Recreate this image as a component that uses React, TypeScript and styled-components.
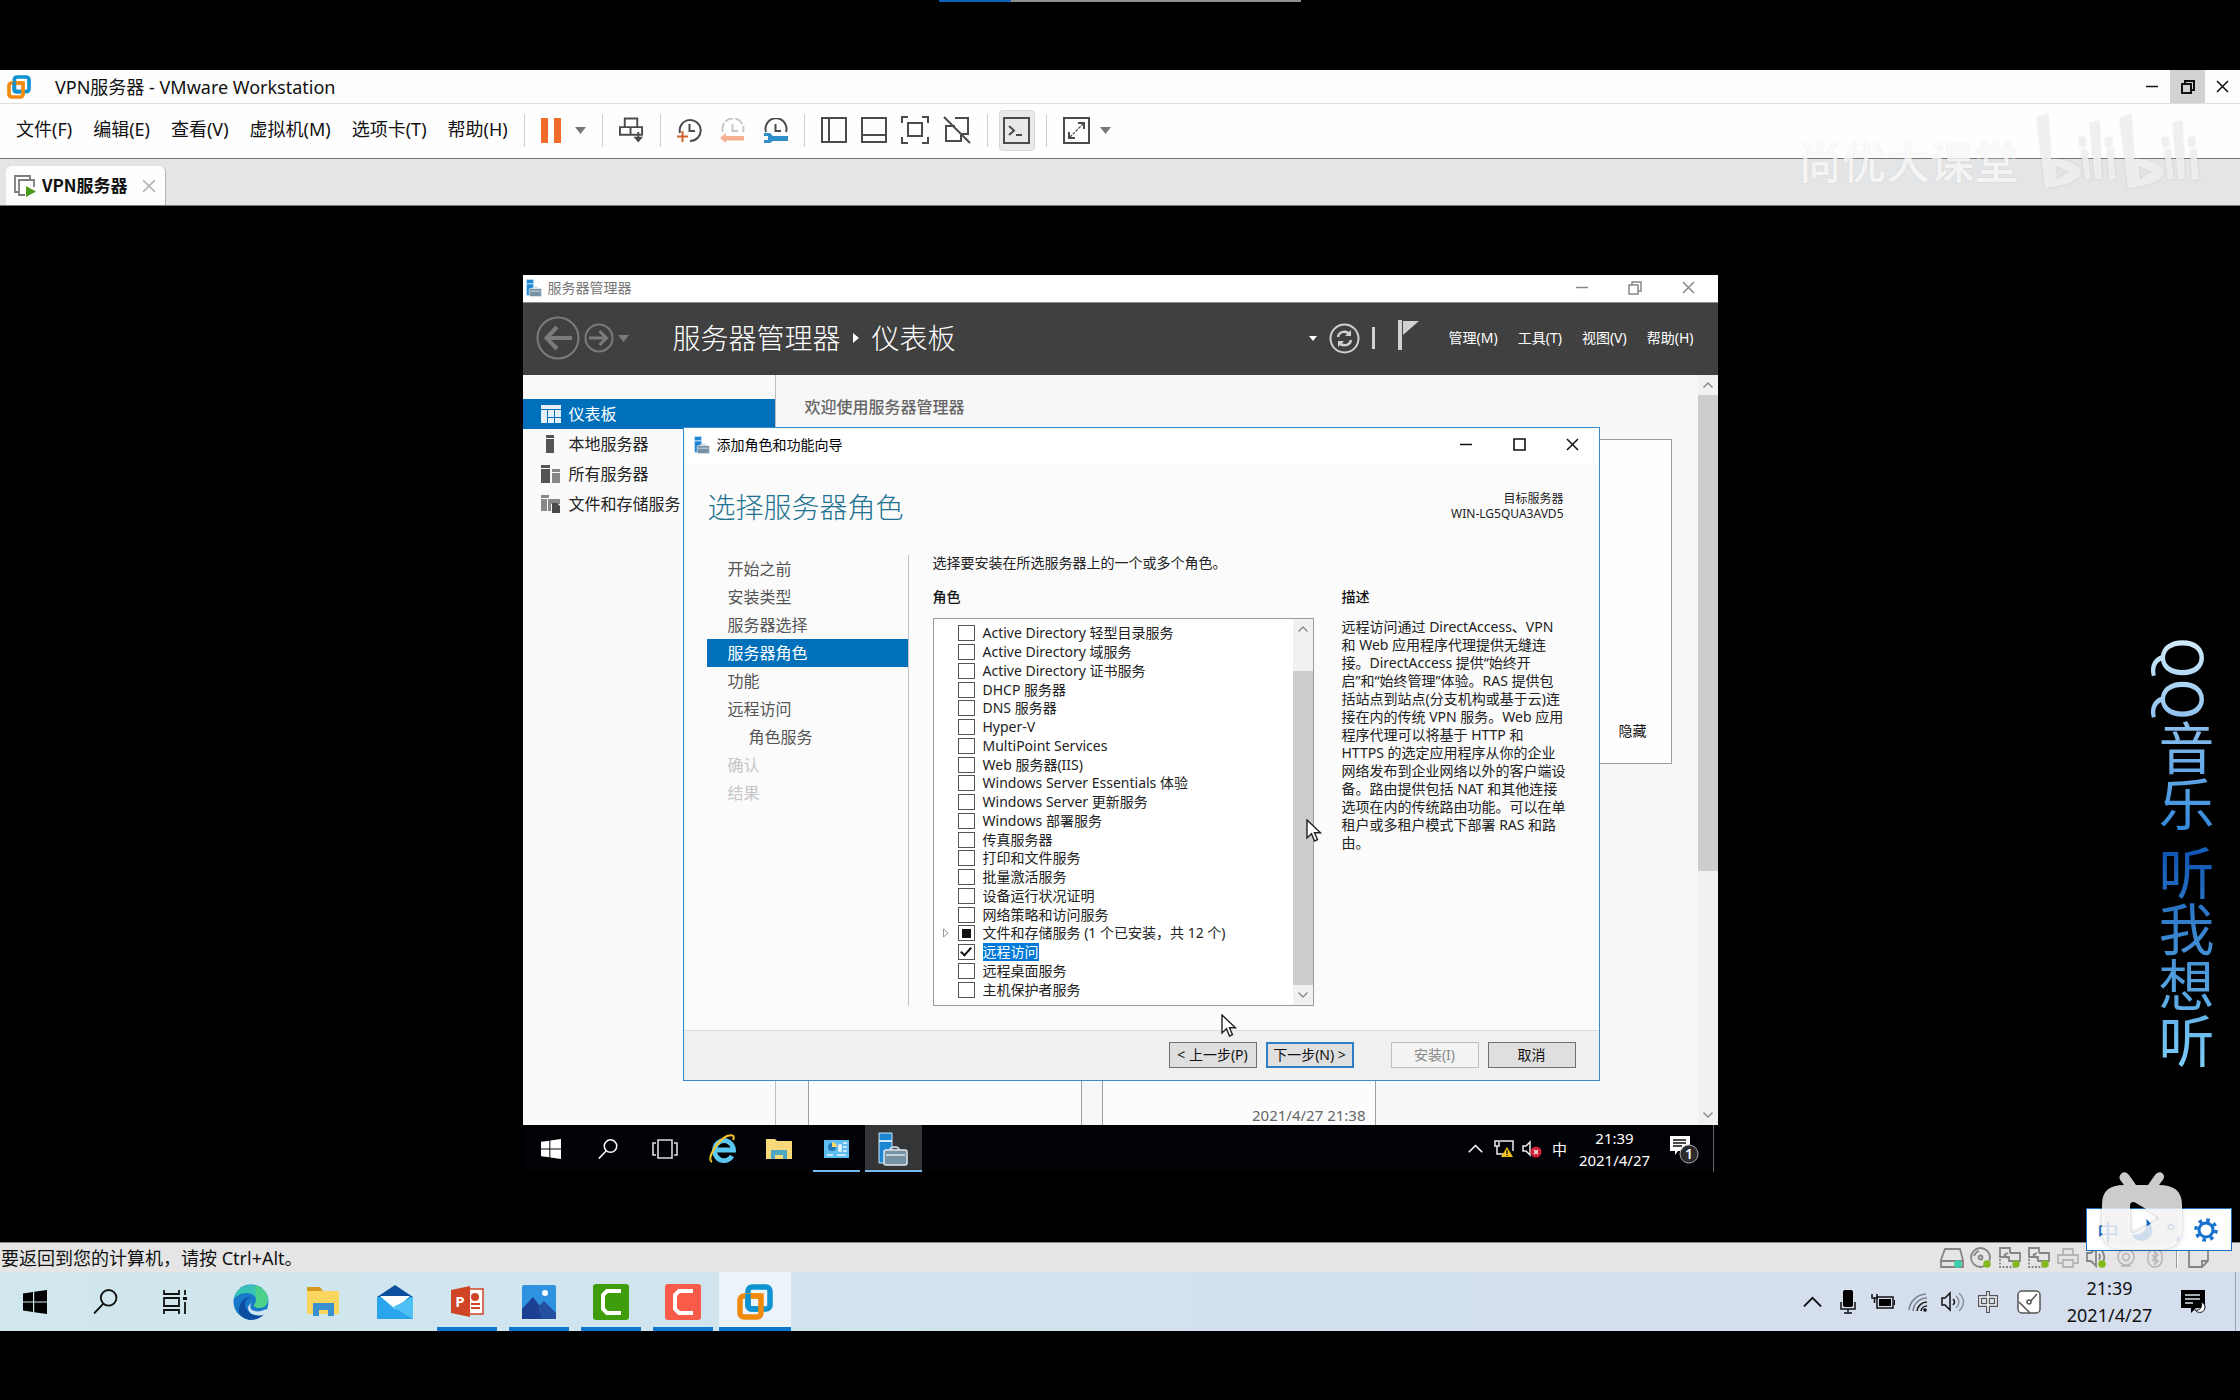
import React from "react";
import styled, { createGlobalStyle, css } from "styled-components";

const Global = createGlobalStyle`
  *, *::before, *::after { box-sizing: border-box; }
  body { margin: 0; background: #000; font-family: "Noto Sans", "Noto Sans CJK SC", sans-serif; color: #111; }
  button { font: inherit; color: inherit; background: none; border: 0; padding: 0; margin: 0; }
  h1, h2, h3, p, ul, ol { margin: 0; padding: 0; font-weight: inherit; font-size: inherit; list-style: none; }
  svg { display: block; flex: none; }
`;

/* ---------- shell ---------- */

const Desktop = styled.div`
  position: relative;
  min-height: 100vh;
  display: flex;
  flex-direction: column;
  padding: 70px 0 69px;
  overflow: hidden;
`;
const TopStrip = styled.div`
  position: absolute;
  top: 0;
  left: 939px;
  width: 362px;
  height: 2px;
  background: linear-gradient(90deg, #0a63b8 72px, #8f8f8f 72px);
`;
const VmWindow = styled.main`
  flex: 1;
  display: flex;
  flex-direction: column;
`;
const TitleBar = styled.header`
  display: flex;
  align-items: center;
  height: 34px;
  padding-left: 7px;
  background: #fdfdfd;
  border-bottom: 1px solid #dedede;
  font-size: 18px;
  line-height: 24px;
`;
const AppTitle = styled.h1`
  margin-left: 24px;
  flex: 1;
`;
const WindowButton = styled.button<{ $active?: boolean }>`
  display: grid;
  place-items: center;
  width: 35px;
  height: 33px;
  background: ${(p) => (p.$active ? "#d2d2d2" : "transparent")};
`;
const MenuRow = styled.div`
  display: flex;
  align-items: center;
  height: 54px;
  padding: 0 0 2px 16px;
  background: #fefefe;
  font-size: 18px;
  line-height: 24px;
`;
const Menu = styled.nav`
  display: flex;
  gap: 21px;
  margin: 0 16px 2px 0;
`;
const ToolGroup = styled.div<{ $gap?: number; $tight?: boolean }>`
  display: flex;
  align-items: center;
  height: 33px;
  gap: ${(p) => p.$gap ?? 14}px;
  padding: 0 ${(p) => (p.$tight ? 11 : 16)}px;
  border-left: 1px solid #cfcfcf;
`;
const Tool = styled.button<{ $pressed?: boolean }>`
  display: grid;
  place-items: center;
  ${(p) =>
    p.$pressed &&
    css`
      width: 36px;
      height: 41px;
      background: #e8e9ea;
      border: 1px solid #d8d8d8;
      border-radius: 4px;
    `}
`;
const TabBar = styled.div`
  display: flex;
  align-items: flex-end;
  height: 48px;
  padding-left: 6px;
  background: #e4e5e7;
  border-top: 1px solid #77777b;
  border-bottom: 1px solid #77777b;
`;
const Tab = styled.div`
  display: flex;
  align-items: center;
  height: 39px;
  padding: 0 9px 0 8px;
  background: #fefefe;
  border-right: 1px solid #b5b5b5;
  border-radius: 6px 6px 0 0;
`;
const TabLabel = styled.button`
  display: flex;
  align-items: center;
  gap: 6px;
  margin-right: 14px;
  font: bold 17px/20px "Noto Sans CJK SC", sans-serif;
  span {
    padding-bottom: 2px;
  }
`;
const Stage = styled.section`
  flex: 1;
  display: grid;
  place-items: center;
  padding-bottom: 1px;
  background: #000;
`;
const StatusBar = styled.footer`
  display: flex;
  align-items: center;
  height: 30px;
  padding: 0 31px 0 1px;
  background: #e5e5e5;
  border-top: 1px solid #8a8a8a;
  font-size: 18px;
  line-height: 24px;
`;
const StatusText = styled.span`
  flex: 1;
`;
const StatusSlot = styled.span`
  display: grid;
  place-items: center;
  width: 29px;
`;
const StatusRule = styled.i`
  width: 2px;
  height: 20px;
  margin: 0 10px 0 7px;
  border-left: 1px solid #9a9a9a;
  border-right: 1px solid #fff;
`;

/* ---------- host taskbar ---------- */

const HostBar = styled.nav`
  display: flex;
  align-items: stretch;
  height: 59px;
  padding-right: 4px;
  background: linear-gradient(90deg, #cfe7ed, #d1e4ee 35%, #d4deed 80%);
`;
const HostButton = styled.button<{ $w: number; $state?: "open" | "active" }>`
  position: relative;
  display: grid;
  place-items: center;
  width: ${(p) => p.$w}px;
  background: ${(p) => (p.$state === "active" ? "#edf3fa" : "transparent")};
  &::after {
    content: "";
    position: absolute;
    bottom: 0;
    left: ${(p) => (p.$state === "active" ? 0 : 6)}px;
    right: ${(p) => (p.$state === "active" ? 0 : 6)}px;
    height: 4px;
    background: ${(p) => (p.$state ? "#0d78d0" : "transparent")};
  }
`;
const HostApps = styled.div`
  display: flex;
  margin-left: 5px;
`;
const Spacer = styled.span`
  flex: 1;
`;
const Clock = styled.button<{ $w: number; $size: number; $line: number }>`
  width: ${(p) => p.$w}px;
  font-size: ${(p) => p.$size}px;
  line-height: ${(p) => p.$line}px;
  text-align: center;
  white-space: nowrap;
`;
const ShowDesktop = styled.button`
  width: 1px;
  margin-left: 15px;
  background: #9aa6b5;
`;

/* ---------- guest display ---------- */

const Guest = styled.div`
  width: 1195px;
  max-width: 100%;
  position: relative;
`;
const Manager = styled.section`
  display: flex;
  flex-direction: column;
  height: 850px;
  background: #f7f7f7;
  overflow: hidden;
`;
const ManagerTitle = styled.header`
  display: flex;
  align-items: center;
  height: 27px;
  padding: 0 3px 2px;
  background: #fff;
  color: #777;
  font-size: 14px;
  line-height: 20px;
`;
const ManagerName = styled.span`
  flex: 1;
  margin-left: 6px;
`;
const CaptionButton = styled.button`
  display: grid;
  place-items: center;
  width: 53px;
  height: 24px;
`;
const ManagerHead = styled.div`
  display: flex;
  align-items: center;
  height: 73px;
  padding: 0 24px 2px 13px;
  background: #404040;
  border-top: 1px solid #8c8c8c;
  color: #fff;
`;
const Crumb = styled.h2`
  display: flex;
  align-items: center;
  gap: 12px;
  flex: 1;
  margin-left: 44px;
  font-size: 28px;
  line-height: 40px;
  font-weight: 300;
`;
const NavButtons = styled.div`
  display: flex;
  align-items: center;
  gap: 4px;
`;
const HeadTools = styled.div`
  display: flex;
  align-items: center;
  gap: 12px;
  margin-right: 30px;
`;
const HeadMenu = styled.nav`
  display: flex;
  gap: 20px;
  font-size: 14px;
  line-height: 20px;
`;
const ManagerBody = styled.div`
  flex: 1;
  display: flex;
  min-height: 0;
`;
const Sidebar = styled.ul`
  width: 253px;
  padding-top: 24px;
  background: #fafafa;
  border-right: 1px solid #bdbdbd;
`;
const SideItem = styled.li<{ $on?: boolean }>`
  button {
    display: flex;
    align-items: center;
    gap: 8px;
    width: 100%;
    height: 30px;
    padding-left: 18px;
    font-size: 16px;
    line-height: 24px;
    color: ${(p) => (p.$on ? "#fff" : "#222")};
    background: ${(p) => (p.$on ? "#0070ba" : "transparent")};
  }
`;
const Dashboard = styled.div`
  flex: 1;
  display: flex;
  flex-direction: column;
  padding: 20px 26px 0 29px;
`;
const Welcome = styled.h3`
  font-size: 16px;
  line-height: 24px;
  font-weight: 500;
  color: #666;
`;
const WelcomePanel = styled.div`
  display: flex;
  align-items: flex-end;
  justify-content: flex-end;
  height: 325px;
  margin: 20px 0 20px 3px;
  padding: 22px 24px;
  background: #fefefe;
  border: 1px solid #9c9c9c;
  font-size: 14px;
  line-height: 20px;
`;
const Tiles = styled.div`
  flex: 1;
  display: flex;
  gap: 20px;
  margin-left: 3px;
`;
const Tile = styled.div`
  width: 274px;
  display: flex;
  align-items: flex-end;
  justify-content: flex-end;
  padding: 0 9px;
  background: #fcfcfc;
  border: 1px solid #a0a0a0;
  border-bottom: 0;
  color: #666;
  font-size: 15px;
  line-height: 20px;
`;
const Scroll = styled.div`
  display: flex;
  flex-direction: column;
  align-items: center;
  width: 20px;
  background: #f1f1f1;
`;
const ScrollArrow = styled.button`
  display: grid;
  place-items: center;
  width: 20px;
  height: 20px;
`;
const Thumb = styled.div<{ $before: number; $grow: number }>`
  width: 20px;
  margin-top: ${(p) => p.$before}px;
  flex: ${(p) => p.$grow} 0 0;
  background: #cdcdcd;
`;
const Rest = styled.div<{ $grow: number }>`
  flex: ${(p) => p.$grow} 0 0;
`;

/* ---------- wizard ---------- */

const Wizard = styled.section`
  position: absolute;
  top: 152px;
  left: 160px;
  right: 118px;
  display: flex;
  flex-direction: column;
  background: #fbfbfb;
  border: 1px solid #3a8acb;
  font-size: 14px;
  line-height: 18px;
  color: #222;
`;
const WizardTitle = styled.header`
  display: flex;
  align-items: center;
  height: 35px;
  padding: 0 0 2px 10px;
  background: #fff;
  color: #000;
`;
const WizardName = styled.span`
  flex: 1;
  margin-left: 7px;
`;
const WizardHead = styled.div`
  display: flex;
  justify-content: space-between;
  height: 92px;
  padding: 24px 35px 0 24px;
`;
const WizardHeading = styled.h2`
  font-size: 28px;
  line-height: 40px;
  font-weight: 300;
  color: #1f7391;
`;
const Target = styled.p`
  padding-top: 4px;
  font-size: 12px;
  line-height: 15px;
  text-align: right;
`;
const WizardBody = styled.div`
  display: flex;
  height: 451px;
  margin-bottom: 24px;
`;
const Steps = styled.ol`
  width: 225px;
  padding-left: 23px;
  border-right: 1px solid #c4c4c4;
`;
const Step = styled.li<{ $state?: "on" | "off" | "sub" }>`
  height: 28px;
  padding-left: ${(p) => (p.$state === "sub" ? 42 : 21)}px;
  font-size: 16px;
  line-height: 28px;
  color: ${(p) => (p.$state === "on" ? "#fff" : p.$state === "off" ? "#c6c6c6" : "#555")};
  background: ${(p) => (p.$state === "on" ? "#0070ba" : "transparent")};
`;
const RolesColumn = styled.div`
  display: flex;
  flex-direction: column;
  width: 381px;
  margin-left: 24px;
`;
const Lead = styled.p`
  line-height: 16px;
  white-space: nowrap;
  margin-bottom: 17px;
`;
const Label = styled.h3`
  font-weight: 500;
  color: #111;
`;
const RoleBox = styled.div`
  flex: 1;
  display: flex;
  margin-top: 12px;
  background: #fff;
  border: 1px solid #9a9a9a;
`;
const RoleList = styled.ul`
  flex: 1;
  display: grid;
  grid-auto-rows: 1fr;
  padding: 5px 0 6px 8px;
`;
const RoleRow = styled.li`
  display: flex;
  align-items: center;
  min-height: 0;
`;
const Expander = styled.span`
  width: 16px;
`;
const RoleLabel = styled.label<{ $on?: boolean }>`
  display: flex;
  align-items: center;
  gap: 8px;
  white-space: nowrap;
  span {
    background: ${(p) => (p.$on ? "#0078d7" : "transparent")};
    color: ${(p) => (p.$on ? "#fff" : "inherit")};
  }
`;
const Check = styled.input<{ $partial?: boolean }>`
  appearance: none;
  display: grid;
  place-items: center;
  width: 17px;
  height: 16px;
  margin: 0;
  background: #fff;
  border: 1px solid #555;
  &::after {
    content: "";
    ${(p) =>
      p.$partial &&
      css`
        width: 9px;
        height: 9px;
        background: #111;
      `}
  }
  &:checked::after {
    width: 6px;
    height: 11px;
    margin-top: -3px;
    border: solid #111;
    border-width: 0 2px 2px 0;
    transform: rotate(42deg);
  }
`;
const Description = styled.div`
  margin: 33px 0 0 28px;
  white-space: nowrap;
`;
const DescriptionText = styled.p`
  margin-top: 12px;
  span {
    display: block;
  }
`;
const WizardFoot = styled.footer`
  display: flex;
  justify-content: flex-end;
  gap: 9px;
  padding: 11px 23px 12px;
  background: #f0f0f0;
  border-top: 1px solid #dcdcdc;
`;
const PushButton = styled.button<{ $default?: boolean; $apart?: boolean }>`
  width: 88px;
  height: 26px;
  margin-left: ${(p) => (p.$apart ? 28 : 0)}px;
  background: #dfdfdf;
  border: ${(p) => (p.$default ? "2px solid #2f7fc6" : "1px solid #707070")};
  white-space: nowrap;
  color: #111;
  &:disabled {
    background: #f3f3f3;
    border-color: #bfbfbf;
    color: #888;
  }
`;

/* ---------- guest taskbar ---------- */

const GuestBar = styled.nav`
  display: flex;
  height: 47px;
  padding-right: 4px;
  background: #010206;
  color: #fff;
`;
const GuestButton = styled.button<{ $state?: "open" | "active" }>`
  position: relative;
  display: grid;
  place-items: center;
  width: 57px;
  background: ${(p) => (p.$state === "active" ? "#343536" : "transparent")};
  &::after {
    content: "";
    position: absolute;
    bottom: 0;
    left: ${(p) => (p.$state === "active" ? 0 : 5)}px;
    right: ${(p) => (p.$state === "active" ? 0 : 5)}px;
    height: 2px;
    background: ${(p) => (p.$state ? "#76b9ed" : "transparent")};
  }
`;
const TraySlot = styled.button<{ $w: number }>`
  display: grid;
  place-items: center;
  width: ${(p) => p.$w}px;
  font-size: 15px;
`;
const GuestRule = styled.i`
  width: 1px;
  background: #666;
`;

/* ---------- things floating over the screen ---------- */

const Float = styled.div<{ $x: number; $y: number }>`
  position: absolute;
  left: ${(p) => p.$x}px;
  top: ${(p) => p.$y}px;
  pointer-events: none;
`;
const Watermark = styled.div`
  position: absolute;
  top: 110px;
  right: 38px;
  display: flex;
  align-items: center;
  gap: 18px;
  color: rgba(255, 255, 255, 0.78);
  font-size: 44px;
  line-height: 60px;
  font-weight: 500;
  text-shadow: 0 0 2px rgba(0, 0, 0, 0.1);
  span {
    padding-top: 22px;
  }
  svg {
    filter: drop-shadow(0 0 1px rgba(0, 0, 0, 0.12));
  }
`;
const Lyrics = styled.div`
  position: absolute;
  top: 637px;
  right: 16px;
  writing-mode: vertical-rl;
  font: 400 56px/76px "Noto Sans CJK SC", sans-serif;
  white-space: nowrap;
  color: transparent;
  background: linear-gradient(180deg, #d3ecfb, #2f86dc 46%, #0f56b4 50%, #7fd0fa);
  background-clip: text;
  -webkit-background-clip: text;
`;
const Ime = styled.div`
  position: absolute;
  right: 8px;
  bottom: 149px;
  display: flex;
  align-items: center;
  justify-content: space-between;
  width: 146px;
  height: 43px;
  padding: 0 13px 0 10px;
  background: #fff;
  border: 1px solid #1f6fc0;
  color: #0f6cc4;
  font-size: 22px;
`;
const TvBadge = styled.div`
  position: absolute;
  right: 57px;
  bottom: 150px;
  filter: drop-shadow(0 0 2px rgba(0, 0, 0, 0.3));
`;

/* ---------- drawings ---------- */

const WindowsLogo = ({ size, fill }: { size: number; fill: string }) => (
  <svg width={size} height={size} viewBox="0 0 24 24" fill={fill}>
    <path d="M0 3.4 10 2v9.4H0zM11.2 1.8 24 0v11.4H11.2zM0 12.6h10V22L0 20.6zM11.2 12.6H24V24l-12.8-1.8z" />
  </svg>
);
const Magnifier = ({ size, color }: { size: number; color: string }) => (
  <svg width={size} height={size} viewBox="0 0 24 24" fill="none" stroke={color} strokeWidth="1.8">
    <circle cx="15" cy="8.5" r="7.5" />
    <path d="M10 14 1 23.5" />
  </svg>
);
const VmLogo = ({ size }: { size: number }) => (
  <svg width={size} height={size} viewBox="0 0 36 36" fill="none">
    <rect x="11" y="3" width="22" height="22" rx="4" stroke="#0c93d0" strokeWidth="5.5" />
    <rect x="3" y="12" width="21" height="21" rx="4" stroke="#f28a0c" strokeWidth="5.5" />
    <path d="M11 14V22a3 3 0 0 0 3 3h7" stroke="#0c93d0" strokeWidth="5.5" />
    <path d="M13 12h11v4" stroke="#f28a0c" strokeWidth="5.5" />
    <path d="M11 10v4" stroke="#0c93d0" strokeWidth="5.5" />
  </svg>
);
const Minus = ({ color }: { color: string }) => (
  <svg width="13" height="13" viewBox="0 0 13 13" stroke={color} strokeWidth="1.5">
    <path d="M0 6.5h12" />
  </svg>
);
const Restore = ({ color, w = 1.5 }: { color: string; w?: number }) => (
  <svg width="14" height="14" viewBox="0 0 14 14" fill="none" stroke={color} strokeWidth={w}>
    <path d="M1 4h9v9H1zM4 4V1h9v9h-3" />
  </svg>
);
const Cross = ({ color, size = 13 }: { color: string; size?: number }) => (
  <svg width={size} height={size} viewBox="0 0 13 13" fill="none" stroke={color} strokeWidth="1.5">
    <path d="M1 1l11 11M12 1 1 12" />
  </svg>
);
const Caret = ({ color = "#777", w = 11 }: { color?: string; w?: number }) => (
  <svg width={w} height={w > 8 ? 7 : 5} viewBox="0 0 11 7" preserveAspectRatio="none" fill={color}>
    <path d="M0 0h11L5.5 7z" />
  </svg>
);
const Chevron = ({ up, color, w = 10 }: { up?: boolean; color: string; w?: number }) => (
  <svg width={w} height={w * 0.6} viewBox="0 0 10 6" fill="none" stroke={color} strokeWidth={w > 12 ? 1 : 1.4}>
    <path d={up ? "M.5 5.5 5 1l4.5 4.5" : "M.5.5 5 5 9.500.5"} />
  </svg>
);
const ServerIcon = ({ size }: { size: number }) => (
  <svg width={size} height={Math.round((size * 34) / 30)} viewBox="0 0 30 34">
    <path d="M1 1h13v30H1z" fill="#1d86d3" stroke="#cfe6f7" strokeWidth="1" />
    <path d="M1 8h13v2H1z" fill="#cfe6f7" />
    <path d="M12 18c0-4 9-4 9 0" fill="none" stroke="#b9cbd8" strokeWidth="2" />
    <rect x="6" y="18" width="23" height="15" rx="2" fill="#7690a4" stroke="#dfe8ee" strokeWidth="1.5" />
    <path d="M8 23h19" stroke="#dfe8ee" strokeWidth="1.5" />
  </svg>
);
const Cursor = () => (
  <svg width="16" height="24" viewBox="0 0 16 24">
    <path d="M1 1v18l4.5-4.2L8.500 22l3-1.300-3-7H14.500z" fill="#fff" stroke="#222" strokeWidth="1.4" />
  </svg>
);
const line = { fill: "none", stroke: "#4b4b4d", strokeWidth: 2 } as const;

const SendKeys = () => (
  <svg width="25" height="26" viewBox="0 0 26 26" {...line}>
    <path d="M6 1h13v9H6zM1 10h11v8H1zM12 10h12v8H12z" />
    <path d="M20 15v6" />
    <path d="M15 20h10l-5 6z" fill="#4b4b4d" stroke="none" />
  </svg>
);
const Snapshot = ({ kind }: { kind: "add" | "revert" | "manage" }) => {
  const faded = kind === "revert";
  return (
    <svg width="25" height="25" viewBox="0 0 25 25" fill="none" stroke={faded ? "#c9c6ca" : "#4b4b4d"} strokeWidth="2">
      <path
        d={kind === "add" ? "M3 15A10.500 10.500 0 1 1 13 23" : "M3 14A10.500 10.500 0 1 1 23 14"}
        strokeDasharray={faded ? "9 2" : undefined}
      />
      <path d="M12.500 6v7H18" />
      {kind === "add" && <path d="M5.500 13v11M0 18.500h11" stroke="#d2622b" />}
      {kind === "revert" && <path d="M0 20l6-5v3h18v4.500H6V25z" fill="#f6b193" stroke="none" />}
      {kind === "manage" && (
        <path d="M1 15h6l3 3h15v5H10l-3 2H1v-3h4v-4H1z" fill="#2f8fc9" stroke="none" />
      )}
    </svg>
  );
};
const LibraryIcon = () => (
  <svg width="26" height="26" viewBox="0 0 26 26" {...line}>
    <path d="M1 1h24v24H1zM8 1v24" />
  </svg>
);
const ThumbBarIcon = () => (
  <svg width="26" height="26" viewBox="0 0 26 26" {...line}>
    <path d="M1 1h24v24H1zM1 18h24" />
  </svg>
);
const FullIcon = () => (
  <svg width="28" height="28" viewBox="0 0 28 28" {...line}>
    <path d="M1 7V1h6M21 1h6v6M27 21v6h-6M7 27H1v-6M7 7h14v13H7z" />
  </svg>
);
const UnityIcon = () => (
  <svg width="28" height="28" viewBox="0 0 28 28" {...line}>
    <path d="M12 2h13v16h-6M9 10H3v15h15v-6M9 10h3M1 1l26 26" />
  </svg>
);
const ConsoleIcon = () => (
  <svg width="27" height="27" viewBox="0 0 27 27" {...line}>
    <path d="M1 1h25v25H1z" />
    <path d="M6 9l5 4.500L6 18M13 18h6" />
  </svg>
);
const StretchIcon = () => (
  <svg width="27" height="27" viewBox="0 0 27 27" {...line}>
    <path d="M1 1h25v25H1z" />
    <path d="M15 6h6v6M12 21H6v-6" />
    <path d="M7 20 20 7" strokeDasharray="3 1" strokeWidth="1.200" />
  </svg>
);
const Bilibili = () => (
  <svg width="166" height="76" viewBox="0 0 166 76" fill="rgba(240,240,240,.9)">
    {[0, 83].map((dx) => (
      <g key={dx} transform={`translate(${dx} 0)`}>
        <path d="M1 5 12 1l3 45c12-1 27 4 30 12 2 10-22 16-36 17zM20 53l1 13 12-7z" fillRule="evenodd" />
        <path d="M43 25l6-1 1 9-6 1zM45 37l6-1 4 30-6 1zM54 10l9-2 3 58-7 1zM69 25l7-1v9l-6 1zM71 37l6-1 3 30-7 1z" />
      </g>
    ))}
  </svg>
);

const sideIcons = {
  dash: (
    <svg width="20" height="18" viewBox="0 0 20 18" fill="#e4f1fb">
      <path d="M0 0h20v4H0zM0 5h6v13H0zM7 5h6v7H7zM14 5h6v7h-6zM7 13h6v5H7zM14 13h6v5h-6z" />
    </svg>
  ),
  local: (
    <svg width="20" height="18" viewBox="0 0 20 18" fill="#555">
      <path d="M5 0h8v3H5zM5 4h8v14H5z" />
    </svg>
  ),
  all: (
    <svg width="20" height="18" viewBox="0 0 20 18" fill="#555">
      <path d="M0 0h9v3H0zM0 4h9v14H0z" />
      <path d="M11 4h8v3h-8zM11 8h8v10h-8z" fill="#888" />
    </svg>
  ),
  files: (
    <svg width="20" height="18" viewBox="0 0 20 18" fill="#888">
      <path d="M0 0h8v3H0zM0 4h6v12H0zM7 4h12v5H7zM7 9h3v7H7z" />
      <path d="M11 8h5l3 3v7h-8z" fill="#4a4a4a" />
    </svg>
  ),
};

const steps: [string, ("on" | "off" | "sub")?][] = [
  ["开始之前"],
  ["安装类型"],
  ["服务器选择"],
  ["服务器角色", "on"],
  ["功能"],
  ["远程访问"],
  ["角色服务", "sub"],
  ["确认", "off"],
  ["结果", "off"],
];
const roles = [
  "Active Directory 轻型目录服务",
  "Active Directory 域服务",
  "Active Directory 证书服务",
  "DHCP 服务器",
  "DNS 服务器",
  "Hyper-V",
  "MultiPoint Services",
  "Web 服务器(IIS)",
  "Windows Server Essentials 体验",
  "Windows Server 更新服务",
  "Windows 部署服务",
  "传真服务器",
  "打印和文件服务",
  "批量激活服务",
  "设备运行状况证明",
  "网络策略和访问服务",
  "文件和存储服务 (1 个已安装，共 12 个)",
  "远程访问",
  "远程桌面服务",
  "主机保护者服务",
];
const about = [
  "远程访问通过 DirectAccess、VPN",
  "和 Web 应用程序代理提供无缝连",
  "接。DirectAccess 提供“始终开",
  "启”和“始终管理”体验。RAS 提供包",
  "括站点到站点(分支机构或基于云)连",
  "接在内的传统 VPN 服务。Web 应用",
  "程序代理可以将基于 HTTP 和",
  "HTTPS 的选定应用程序从你的企业",
  "网络发布到企业网络以外的客户端设",
  "备。路由提供包括 NAT 和其他连接",
  "选项在内的传统路由功能。可以在单",
  "租户或多租户模式下部署 RAS 和路",
  "由。",
];

const AddRolesWizard = () => (
  <Wizard>
    <WizardTitle>
      <ServerIcon size={16} />
      <WizardName>添加角色和功能向导</WizardName>
      <CaptionButton aria-label="最小化"><Minus color="#111" /></CaptionButton>
      <CaptionButton aria-label="最大化">
        <svg width="13" height="13" viewBox="0 0 13 13" fill="none" stroke="#111" strokeWidth="1.6"><path d="M1 1h11v11H1z" /></svg>
      </CaptionButton>
      <CaptionButton aria-label="关闭"><Cross color="#111" /></CaptionButton>
    </WizardTitle>
    <WizardHead>
      <WizardHeading>选择服务器角色</WizardHeading>
      <Target>
        目标服务器
        <br />
        WIN-LG5QUA3AVD5
      </Target>
    </WizardHead>
    <WizardBody>
      <Steps>
        {steps.map(([name, state]) => (
          <Step key={name} $state={state}>{name}</Step>
        ))}
      </Steps>
      <RolesColumn>
        <Lead>选择要安装在所选服务器上的一个或多个角色。</Lead>
        <Label>角色</Label>
        <RoleBox>
          <RoleList>
            {roles.map((role, i) => (
              <RoleRow key={role}>
                <Expander>
                  {i === 16 && (
                    <svg width="8" height="10" viewBox="0 0 8 10" fill="none" stroke="#999"><path d="M1.500 1v8L6 5z" /></svg>
                  )}
                </Expander>
                <RoleLabel $on={i === 17}>
                  <Check type="checkbox" defaultChecked={i === 17} $partial={i === 16} />
                  <span>{role}</span>
                </RoleLabel>
              </RoleRow>
            ))}
          </RoleList>
          <Scroll>
            <ScrollArrow aria-label="向上"><Chevron up color="#888" /></ScrollArrow>
            <Thumb $before={32} $grow={1} />
            <ScrollArrow aria-label="向下"><Chevron color="#888" /></ScrollArrow>
          </Scroll>
        </RoleBox>
      </RolesColumn>
      <Description>
        <Label>描述</Label>
        <DescriptionText>
          {about.map((t) => (
            <span key={t}>{t}</span>
          ))}
        </DescriptionText>
      </Description>
    </WizardBody>
    <WizardFoot>
      <PushButton>&lt; 上一步(P)</PushButton>
      <PushButton $default>下一步(N) &gt;</PushButton>
      <PushButton $apart disabled>安装(I)</PushButton>
      <PushButton>取消</PushButton>
    </WizardFoot>
  </Wizard>
);

const ServerManager = () => (
  <Manager>
    <ManagerTitle>
      <ServerIcon size={16} />
      <ManagerName>服务器管理器</ManagerName>
      <CaptionButton aria-label="最小化"><Minus color="#888" /></CaptionButton>
      <CaptionButton aria-label="还原"><Restore color="#888" /></CaptionButton>
      <CaptionButton aria-label="关闭"><Cross color="#888" /></CaptionButton>
    </ManagerTitle>
    <ManagerHead>
      <NavButtons>
        <button aria-label="后退">
          <svg width="44" height="44" viewBox="0 0 44 44" fill="none" stroke="#7b7b7b" strokeWidth="2">
            <circle cx="22" cy="22" r="20.500" />
            <path d="M36 22H11M21 11 10.500 22 21 33" strokeWidth="4" />
          </svg>
        </button>
        <button aria-label="前进">
          <svg width="30" height="30" viewBox="0 0 30 30" fill="none" stroke="#7b7b7b" strokeWidth="2">
            <circle cx="15" cy="15" r="13.500" />
            <path d="M5 15h17M15.500 8l7 7-7 7" strokeWidth="3" />
          </svg>
        </button>
        <Caret color="#7b7b7b" />
      </NavButtons>
      <Crumb>
        服务器管理器
        <svg width="7" height="10" viewBox="0 0 7 10" fill="#fff"><path d="M0 0v10l6-5z" /></svg>
        仪表板
      </Crumb>
      <HeadTools>
        <Caret color="#fff" w={8} />
        <svg width="31" height="31" viewBox="0 0 31 31" fill="none" stroke="#d0d0d0" strokeWidth="2">
          <circle cx="15.500" cy="15.500" r="14" />
          <path d="M9 14c1-6 9-7 12-2M22 17c-1 6-9 7-12 2" strokeWidth="2.500" />
          <path d="M22 7v6h-6zM9 24v-6h6z" fill="#d0d0d0" stroke="none" />
        </svg>
        <svg width="3" height="22" viewBox="0 0 3 22" fill="#d0d0d0"><path d="M0 0h3v22H0z" /></svg>
        <svg width="32" height="36" viewBox="0 0 32 36" fill="#d0d0d0">
          <path d="M11 0h4v30h-4zM16 1h16L16 15z" />
        </svg>
      </HeadTools>
      <HeadMenu>
        <button>管理(M)</button>
        <button>工具(T)</button>
        <button>视图(V)</button>
        <button>帮助(H)</button>
      </HeadMenu>
    </ManagerHead>
    <ManagerBody>
      <Sidebar>
        <SideItem $on><button>{sideIcons.dash}仪表板</button></SideItem>
        <SideItem><button>{sideIcons.local}本地服务器</button></SideItem>
        <SideItem><button>{sideIcons.all}所有服务器</button></SideItem>
        <SideItem><button>{sideIcons.files}文件和存储服务</button></SideItem>
      </Sidebar>
      <Dashboard>
        <Welcome>欢迎使用服务器管理器</Welcome>
        <WelcomePanel><button>隐藏</button></WelcomePanel>
        <Tiles>
          <Tile />
          <Tile>2021/4/27 21:38</Tile>
        </Tiles>
      </Dashboard>
      <Scroll>
        <ScrollArrow aria-label="向上"><Chevron up color="#888" /></ScrollArrow>
        <Thumb $before={0} $grow={67} />
        <Rest $grow={33} />
        <ScrollArrow aria-label="向下"><Chevron color="#888" /></ScrollArrow>
      </Scroll>
    </ManagerBody>
  </Manager>
);

const GuestTaskbar = () => (
  <GuestBar>
    <GuestButton aria-label="开始"><WindowsLogo size={20} fill="#fff" /></GuestButton>
    <GuestButton aria-label="搜索"><Magnifier size={20} color="#fff" /></GuestButton>
    <GuestButton aria-label="任务视图">
      <svg width="26" height="20" viewBox="0 0 26 20" fill="none" stroke="#ddd" strokeWidth="1.600">
        <path d="M6 1h14v18H6zM4 4H1v12h3M22 4h3v12h-3" />
      </svg>
    </GuestButton>
    <GuestButton aria-label="Internet Explorer">
      <svg width="27" height="30" viewBox="0 0 27 30" fill="none">
        <path d="M23 22a9.500 10 0 1 1 1.500-6H7" stroke="#5cc8f2" strokeWidth="4.800" />
        <path d="M3 28C-3 25 8 7 18 2c6-2 8 0 6 4" stroke="#f3c62c" strokeWidth="2" />
      </svg>
    </GuestButton>
    <GuestButton aria-label="文件资源管理器">
      <svg width="26" height="22" viewBox="0 0 26 22">
        <path d="M0 1h9l2 2h15v18H0z" fill="#f8d878" />
        <path d="M5 21v-9h16v9h-4v-4H9v4z" fill="#4da7c2" />
      </svg>
    </GuestButton>
    <GuestButton aria-label="控制面板" $state="open">
      <svg width="25" height="18" viewBox="0 0 25 18">
        <path d="M0 0h25v18H0z" fill="#5dbdf0" />
        <circle cx="8" cy="7" r="4" fill="#2378b8" />
        <path d="M8 7V2a5 5 0 0 1 5 5z" fill="#f5d76a" />
        <path d="M15 5h2v6h-2zM19 3h4M19 7h4M19 11h4M3 15h6M13 15h9" stroke="#eaf6ff" strokeWidth="1.500" fill="#eaf6ff" />
      </svg>
    </GuestButton>
    <GuestButton aria-label="服务器管理器" $state="active"><ServerIcon size={30} /></GuestButton>
    <Spacer />
    <TraySlot $w={28} aria-label="显示隐藏的图标"><Chevron up color="#fff" w={15} /></TraySlot>
    <TraySlot $w={28} aria-label="网络">
      <svg width="20" height="18" viewBox="0 0 20 18" fill="none" stroke="#eee" strokeWidth="1.500">
        <path d="M6 1h13v10M1 1h4v5H1zM3 6v8h7" />
        <path d="M13 7l6 10H7z" fill="#f6c21c" stroke="none" />
        <path d="M13 10v4M13 15v1" stroke="#222" />
      </svg>
    </TraySlot>
    <TraySlot $w={28} aria-label="音量">
      <svg width="20" height="18" viewBox="0 0 20 18" fill="none" stroke="#eee" strokeWidth="1.500">
        <path d="M1 6h3l4-4v13l-4-4H1z" />
        <circle cx="14" cy="12" r="5.500" fill="#d2203c" stroke="none" />
        <path d="M12 10l4 4M16 10l-4 4" />
      </svg>
    </TraySlot>
    <TraySlot $w={28}>中</TraySlot>
    <Clock $w={82} $size={15} $line={22}>
      21:39
      <br />
      2021/4/27
    </Clock>
    <TraySlot $w={57} aria-label="通知">
      <svg width="30" height="30" viewBox="0 0 30 30">
        <path d="M1 2h20v15H9l-3 4v-4H1z" fill="#fff" />
        <path d="M4 6h13M4 9h13M4 12h9" stroke="#111" strokeWidth="1.500" />
        <circle cx="20" cy="20" r="9" fill="#2b2b2b" stroke="#aaa" />
        <text x="20" y="25" textAnchor="middle" fill="#fff" fontSize="14" fontWeight="600">1</text>
      </svg>
    </TraySlot>
    <GuestRule />
  </GuestBar>
);

const HostTaskbar = () => (
  <HostBar>
    <HostButton $w={70} aria-label="开始"><WindowsLogo size={24} fill="#000" /></HostButton>
    <HostButton $w={70} aria-label="搜索"><Magnifier size={25} color="#111" /></HostButton>
    <HostButton $w={70} aria-label="任务视图">
      <svg width="25" height="24" viewBox="0 0 25 24" fill="none" stroke="#111" strokeWidth="1.800">
        <path d="M1 0v4h15V0M1 8h15v8H1zM1 24v-4h15v4M22 0v5M22 12v12" />
        <path d="M20 7h4v3h-4z" fill="#111" stroke="none" />
      </svg>
    </HostButton>
    <HostApps>
      <HostButton $w={72} aria-label="Edge">
        <svg width="36" height="36" viewBox="0 0 36 36">
          <circle cx="18" cy="18" r="17.500" fill="#1877c9" />
          <path d="M1 15C3 5 10 1 18 1c10 0 17 7 17 15 0 5-4 8-9 8-3 0-5-1-5-3 0-1 2-2 2-5 0-4-4-7-9-7C8 9 3 12 1 15z" fill="#36c3b4" />
          <path d="M22 1.500C31 3 35 10 35 16c0 5-4 8-9 8-3 0-5-1-5-3 0-1 2-2 2-5z" fill="#54d778" opacity=".7" />
          <path d="M12 20c0 8 8 12 19 10-3 4-8 6-13 6C9 35 3 29 7 21c2-5 6-8 11-8-4 1-6 4-6 7z" fill="#0c4da0" />
          <path d="M21 18c-4 1-5 5-2 8 3 2 9 2 14-1 0 2 3 0 3 0v3c-3 3-9 4-14 3-9-2-9-11-1-13z" fill="#d0e6ee" />
        </svg>
      </HostButton>
      <HostButton $w={72} aria-label="文件资源管理器">
        <svg width="34" height="30" viewBox="0 0 34 30">
          <path d="M1 0h13l3 4H1z" fill="#d79a1e" />
          <path d="M1 4h32v23H1z" fill="#fbd65f" />
          <path d="M7 29V16h21v13h-6v-6h-9v6z" fill="#3c8fd0" />
        </svg>
      </HostButton>
      <HostButton $w={72} aria-label="邮件">
        <svg width="36" height="34" viewBox="0 0 36 34">
          <path d="M0 12 18 0l18 12z" fill="#0b4f9e" />
          <path d="M0 12h36v22H0z" fill="#2aa4ea" />
          <path d="M3 11h30L18 24z" fill="#fdfdfd" />
          <path d="M36 12v22L16 22z" fill="#4fc0f5" />
        </svg>
      </HostButton>
      <HostButton $w={72} $state="open" aria-label="PowerPoint">
        <svg width="33" height="31" viewBox="0 0 33 31">
          <path d="M16 3h16v25H16z" fill="#fff" stroke="#cf4526" strokeWidth="1.500" />
          <circle cx="24" cy="11" r="4" fill="#cf4526" />
          <path d="M20 18h9M20 22h9" stroke="#cf4526" strokeWidth="2" />
          <path d="M0 4 19 0v31L0 27z" fill="#cf4526" />
          <text x="9" y="21" textAnchor="middle" fill="#fff" fontSize="15" fontWeight="700">P</text>
        </svg>
      </HostButton>
      <HostButton $w={72} $state="open" aria-label="照片">
        <svg width="34" height="34" viewBox="0 0 34 34">
          <rect width="34" height="34" rx="2" fill="#2f92e0" />
          <path d="M0 24 11 12l13 17v5H0z" fill="#1c3f94" />
          <path d="M16 22l6-6 12 12v6H20z" fill="#24519f" />
          <circle cx="23" cy="8" r="3" fill="#fff" />
        </svg>
      </HostButton>
      {["#3f9c0a", "#f95b4a"].map((fill) => (
        <HostButton $w={72} $state="open" key={fill} aria-label="Camtasia">
          <svg width="36" height="36" viewBox="0 0 36 36">
            <rect width="36" height="36" rx="3" fill={fill} />
            <path d="M28 7H14l-4 4v14l4 4h14" fill="none" stroke="#fff" strokeWidth="4" />
          </svg>
        </HostButton>
      ))}
      <HostButton $w={72} $state="active" aria-label="VMware Workstation"><VmLogo size={36} /></HostButton>
    </HostApps>
    <Spacer />
    <TraySlot $w={35} aria-label="显示隐藏的图标"><Chevron up color="#111" w={19} /></TraySlot>
    <TraySlot $w={35} aria-label="麦克风">
      <svg width="16" height="24" viewBox="0 0 16 24">
        <rect x="3" y="0" width="10" height="17" rx="2" />
        <path d="M1 12v7h14v-7M8 19v4M4 23h8" fill="none" stroke="#111" strokeWidth="1.500" />
      </svg>
    </TraySlot>
    <TraySlot $w={35} aria-label="电池">
      <svg width="24" height="17" viewBox="0 0 24 17">
        <path d="M6 4h16v11H6z" fill="none" stroke="#111" strokeWidth="1.500" />
        <path d="M8 6h12v7H8zM23 7h1v5h-1z" />
        <path d="M1 1v4h5V1M3.500 5v5" fill="none" stroke="#111" strokeWidth="1.500" />
      </svg>
    </TraySlot>
    <TraySlot $w={35} aria-label="无线网络">
      <svg width="20" height="20" viewBox="0 0 20 20" fill="none" strokeWidth="1.600">
        <path d="M1 18A18 18 0 0 1 18 2M5 19A14 14 0 0 1 19 6" stroke="#7b8490" />
        <path d="M9 19a10 10 0 0 1 10-9M13 19a6 6 0 0 1 6-5" stroke="#222" />
        <circle cx="17" cy="18" r="1.800" fill="#111" />
      </svg>
    </TraySlot>
    <TraySlot $w={35} aria-label="音量">
      <svg width="24" height="22" viewBox="0 0 24 22" fill="none" stroke="#111" strokeWidth="1.500">
        <path d="M1 7h3l5-5v17l-5-5H1zM12 8c2 2 2 4 0 6" />
        <path d="M15 5c4 4 4 8 0 12M18 2c6 6 6 12 0 18" stroke="#8b94a0" />
      </svg>
    </TraySlot>
    <TraySlot $w={35} aria-label="输入法">
      <svg width="20" height="22" viewBox="0 0 20 22" fill="none">
        <path d="M2 6h16v8H2zM10 0v22" stroke="#555" strokeWidth="4" />
        <path d="M2 6h16v8H2zM10 1v20" stroke="#f6f8fb" strokeWidth="1.600" />
      </svg>
    </TraySlot>
    <TraySlot $w={48} aria-label="手写笔">
      <svg width="24" height="24" viewBox="0 0 24 24" fill="#fff" stroke="#555" strokeWidth="1.500">
        <rect x="1" y="1" width="22" height="22" rx="4" />
        <path d="M2 12l11 11M20 4l-7 8" />
        <circle cx="12" cy="12" r="2" />
      </svg>
    </TraySlot>
    <Clock $w={113} $size={18} $line={27}>
      21:39
      <br />
      2021/4/27
    </Clock>
    <TraySlot $w={54} aria-label="通知">
      <svg width="25" height="24" viewBox="0 0 25 24">
        <path d="M0 0h24v18h-9l-5 5v-5H0z" />
        <path d="M4 5h15M4 9h15M4 13h8" stroke="#dbe3ee" strokeWidth="1.500" />
        <path d="M20 12c2 6-2 9-6 8 3 4 10 3 10-3 0-3-2-4-4-5z" fill="#fff" stroke="#111" />
      </svg>
    </TraySlot>
    <ShowDesktop aria-label="显示桌面" />
  </HostBar>
);

const NetIcon = () => (
  <svg width="22" height="21" viewBox="0 0 22 21" fill="none" stroke="#858585" strokeWidth="1.800">
    <path d="M11 6V1H1v9h8" />
    <path d="M11 6h10v8H10V9M5 8l4-2M5 8l4 3" />
    <path d="M1 12v8h14" strokeDasharray="2 1.500" />
    <circle cx="17" cy="17" r="3.800" fill="#83b91f" stroke="none" />
  </svg>
);

const StatusIcons = () => (
  <>
    <StatusSlot>
      <svg width="24" height="20" viewBox="0 0 24 20" fill="none" stroke="#858585" strokeWidth="1.800">
        <path d="M5 1h15l3 11v7H1v-7zM1 13h22" />
        <circle cx="18" cy="16" r="3.800" fill="#35cfae" stroke="none" />
      </svg>
    </StatusSlot>
    <StatusSlot>
      <svg width="22" height="21" viewBox="0 0 22 21" fill="none" stroke="#858585" strokeWidth="1.800">
        <circle cx="10.500" cy="10.500" r="9.500" />
        <circle cx="10.500" cy="10.500" r="2" />
        <path d="M4 9c1-3 2-4 5-5" />
        <circle cx="17" cy="17" r="3.800" fill="#83b91f" stroke="none" />
      </svg>
    </StatusSlot>
    <StatusSlot><NetIcon /></StatusSlot>
    <StatusSlot><NetIcon /></StatusSlot>
    <StatusSlot>
      <svg width="22" height="20" viewBox="0 0 22 20" fill="none" stroke="#b5b5b5" strokeWidth="1.800">
        <path d="M6 6V1h10v5M5 15H1V7h20v8h-4M6 12h10v7H6z" />
      </svg>
    </StatusSlot>
    <StatusSlot>
      <svg width="22" height="21" viewBox="0 0 22 21" fill="none" stroke="#858585" strokeWidth="1.800">
        <path d="M1 6h4l5-5v18l-5-5H1zM13 7c2 2 1 4 0 6M16 4c3 4 3 7 1 11" />
        <circle cx="16" cy="17" r="3.800" fill="#83b91f" stroke="none" />
      </svg>
    </StatusSlot>
    <StatusSlot>
      <svg width="18" height="20" viewBox="0 0 18 20" fill="none" stroke="#b5b5b5" strokeWidth="1.500">
        <circle cx="9" cy="9" r="8" />
        <circle cx="9" cy="9" r="3.500" />
        <path d="M4 18h10" />
      </svg>
    </StatusSlot>
    <StatusSlot>
      <svg width="16" height="20" viewBox="0 0 16 20" fill="none" stroke="#b5b5b5" strokeWidth="1.500">
        <rect x="1" y="1" width="14" height="18" rx="7" />
        <path d="M5 7l6 6-3 3V4l3 3-6 6" />
      </svg>
    </StatusSlot>
    <StatusRule />
    <svg width="21" height="20" viewBox="0 0 21 20" fill="none" stroke="#858585" strokeWidth="1.800">
      <path d="M1 1h19v12l-6 6H1zM20 13h-6v6" />
    </svg>
  </>
);

export default function App() {
  return (
    <>
      <Global />
      <Desktop>
        <TopStrip />
        <VmWindow>
          <TitleBar>
            <VmLogo size={24} />
            <AppTitle>VPN服务器 - VMware Workstation</AppTitle>
            <WindowButton aria-label="最小化"><Minus color="#111" /></WindowButton>
            <WindowButton $active aria-label="还原"><Restore color="#111" w={2} /></WindowButton>
            <WindowButton aria-label="关闭"><Cross color="#111" /></WindowButton>
          </TitleBar>
          <MenuRow>
            <Menu>
              {["文件(F)", "编辑(E)", "查看(V)", "虚拟机(M)", "选项卡(T)", "帮助(H)"].map((m) => (
                <button key={m}>{m}</button>
              ))}
            </Menu>
            <ToolGroup>
              <Tool aria-label="挂起">
                <svg width="20" height="25" viewBox="0 0 20 25" fill="#f26a2a"><path d="M0 0h7v25H0zM13 0h7v25h-7z" /></svg>
              </Tool>
              <Caret />
            </ToolGroup>
            <ToolGroup>
              <Tool aria-label="发送 Ctrl+Alt+Del"><SendKeys /></Tool>
            </ToolGroup>
            <ToolGroup $gap={18}>
              <Tool aria-label="拍摄快照"><Snapshot kind="add" /></Tool>
              <Tool aria-label="恢复快照"><Snapshot kind="revert" /></Tool>
              <Tool aria-label="管理快照"><Snapshot kind="manage" /></Tool>
            </ToolGroup>
            <ToolGroup>
              <Tool aria-label="显示库"><LibraryIcon /></Tool>
              <Tool aria-label="缩略图栏"><ThumbBarIcon /></Tool>
              <Tool aria-label="全屏"><FullIcon /></Tool>
              <Tool aria-label="Unity"><UnityIcon /></Tool>
            </ToolGroup>
            <ToolGroup $tight>
              <Tool $pressed aria-label="控制台视图"><ConsoleIcon /></Tool>
            </ToolGroup>
            <ToolGroup $gap={10}>
              <Tool aria-label="拉伸"><StretchIcon /></Tool>
              <Caret />
            </ToolGroup>
          </MenuRow>
          <TabBar>
            <Tab>
              <TabLabel>
                <svg width="22" height="22" viewBox="0 0 22 22" fill="none" stroke="#7d7d7d" strokeWidth="1.800">
                  <path d="M4 17H1V1h15v3M11 20H5V5h15v7" />
                  <path d="M12 11v11l10-5.500z" fill="#4b9a1c" stroke="none" />
                </svg>
                <span>VPN服务器</span>
              </TabLabel>
              <button aria-label="关闭标签"><Cross color="#b5b5b5" size={14} /></button>
            </Tab>
          </TabBar>
          <Stage>
            <Guest>
              <ServerManager />
              <GuestTaskbar />
              <AddRolesWizard />
              <Float $x={783} $y={544}><Cursor /></Float>
              <Float $x={698} $y={739}><Cursor /></Float>
            </Guest>
          </Stage>
          <StatusBar>
            <StatusText>要返回到您的计算机，请按 Ctrl+Alt。</StatusText>
            <StatusIcons />
          </StatusBar>
        </VmWindow>
        <HostTaskbar />
        <Watermark>
          <span>尚优大课堂</span>
          <Bilibili />
        </Watermark>
        <Lyrics>QQ音乐 听我想听</Lyrics>
        <Ime>
          <span>中</span>
          <svg width="22" height="22" viewBox="0 0 22 22" fill="#1670cf"><path d="M14 0c10 6 8 21-4 22C4 22 1 19 0 15c10 3 17-5 14-15z" /></svg>
          <span>°,</span>
          <svg width="24" height="24" viewBox="0 0 24 24" fill="none" stroke="#1670cf">
            <circle cx="12" cy="12" r="7" strokeWidth="3" />
            <circle cx="12" cy="12" r="10" strokeWidth="3.500" strokeDasharray="3.500 4.354" />
          </svg>
        </Ime>
        <TvBadge>
          <svg width="82" height="78" viewBox="0 0 82 78" fill="rgba(255,255,255,.8)">
            <path
              fillRule="evenodd"
              d="M20 2c2-3 6-2 8 1l7 10h12l7-10c2-3 6-4 8-1 2 2 1 5-1 7l-3 4c15 0 23 6 23 20v24c0 14-8 20-22 20H22C8 77 1 71 1 57V33c0-14 7-20 22-20l-3-4c-2-2-2-5 0-7zM29 34v23c0 4 3 5 6 3l20-11c3-2 3-4 0-6L35 31c-3-2-6-1-6 3z"
            />
          </svg>
        </TvBadge>
      </Desktop>
    </>
  );
}
